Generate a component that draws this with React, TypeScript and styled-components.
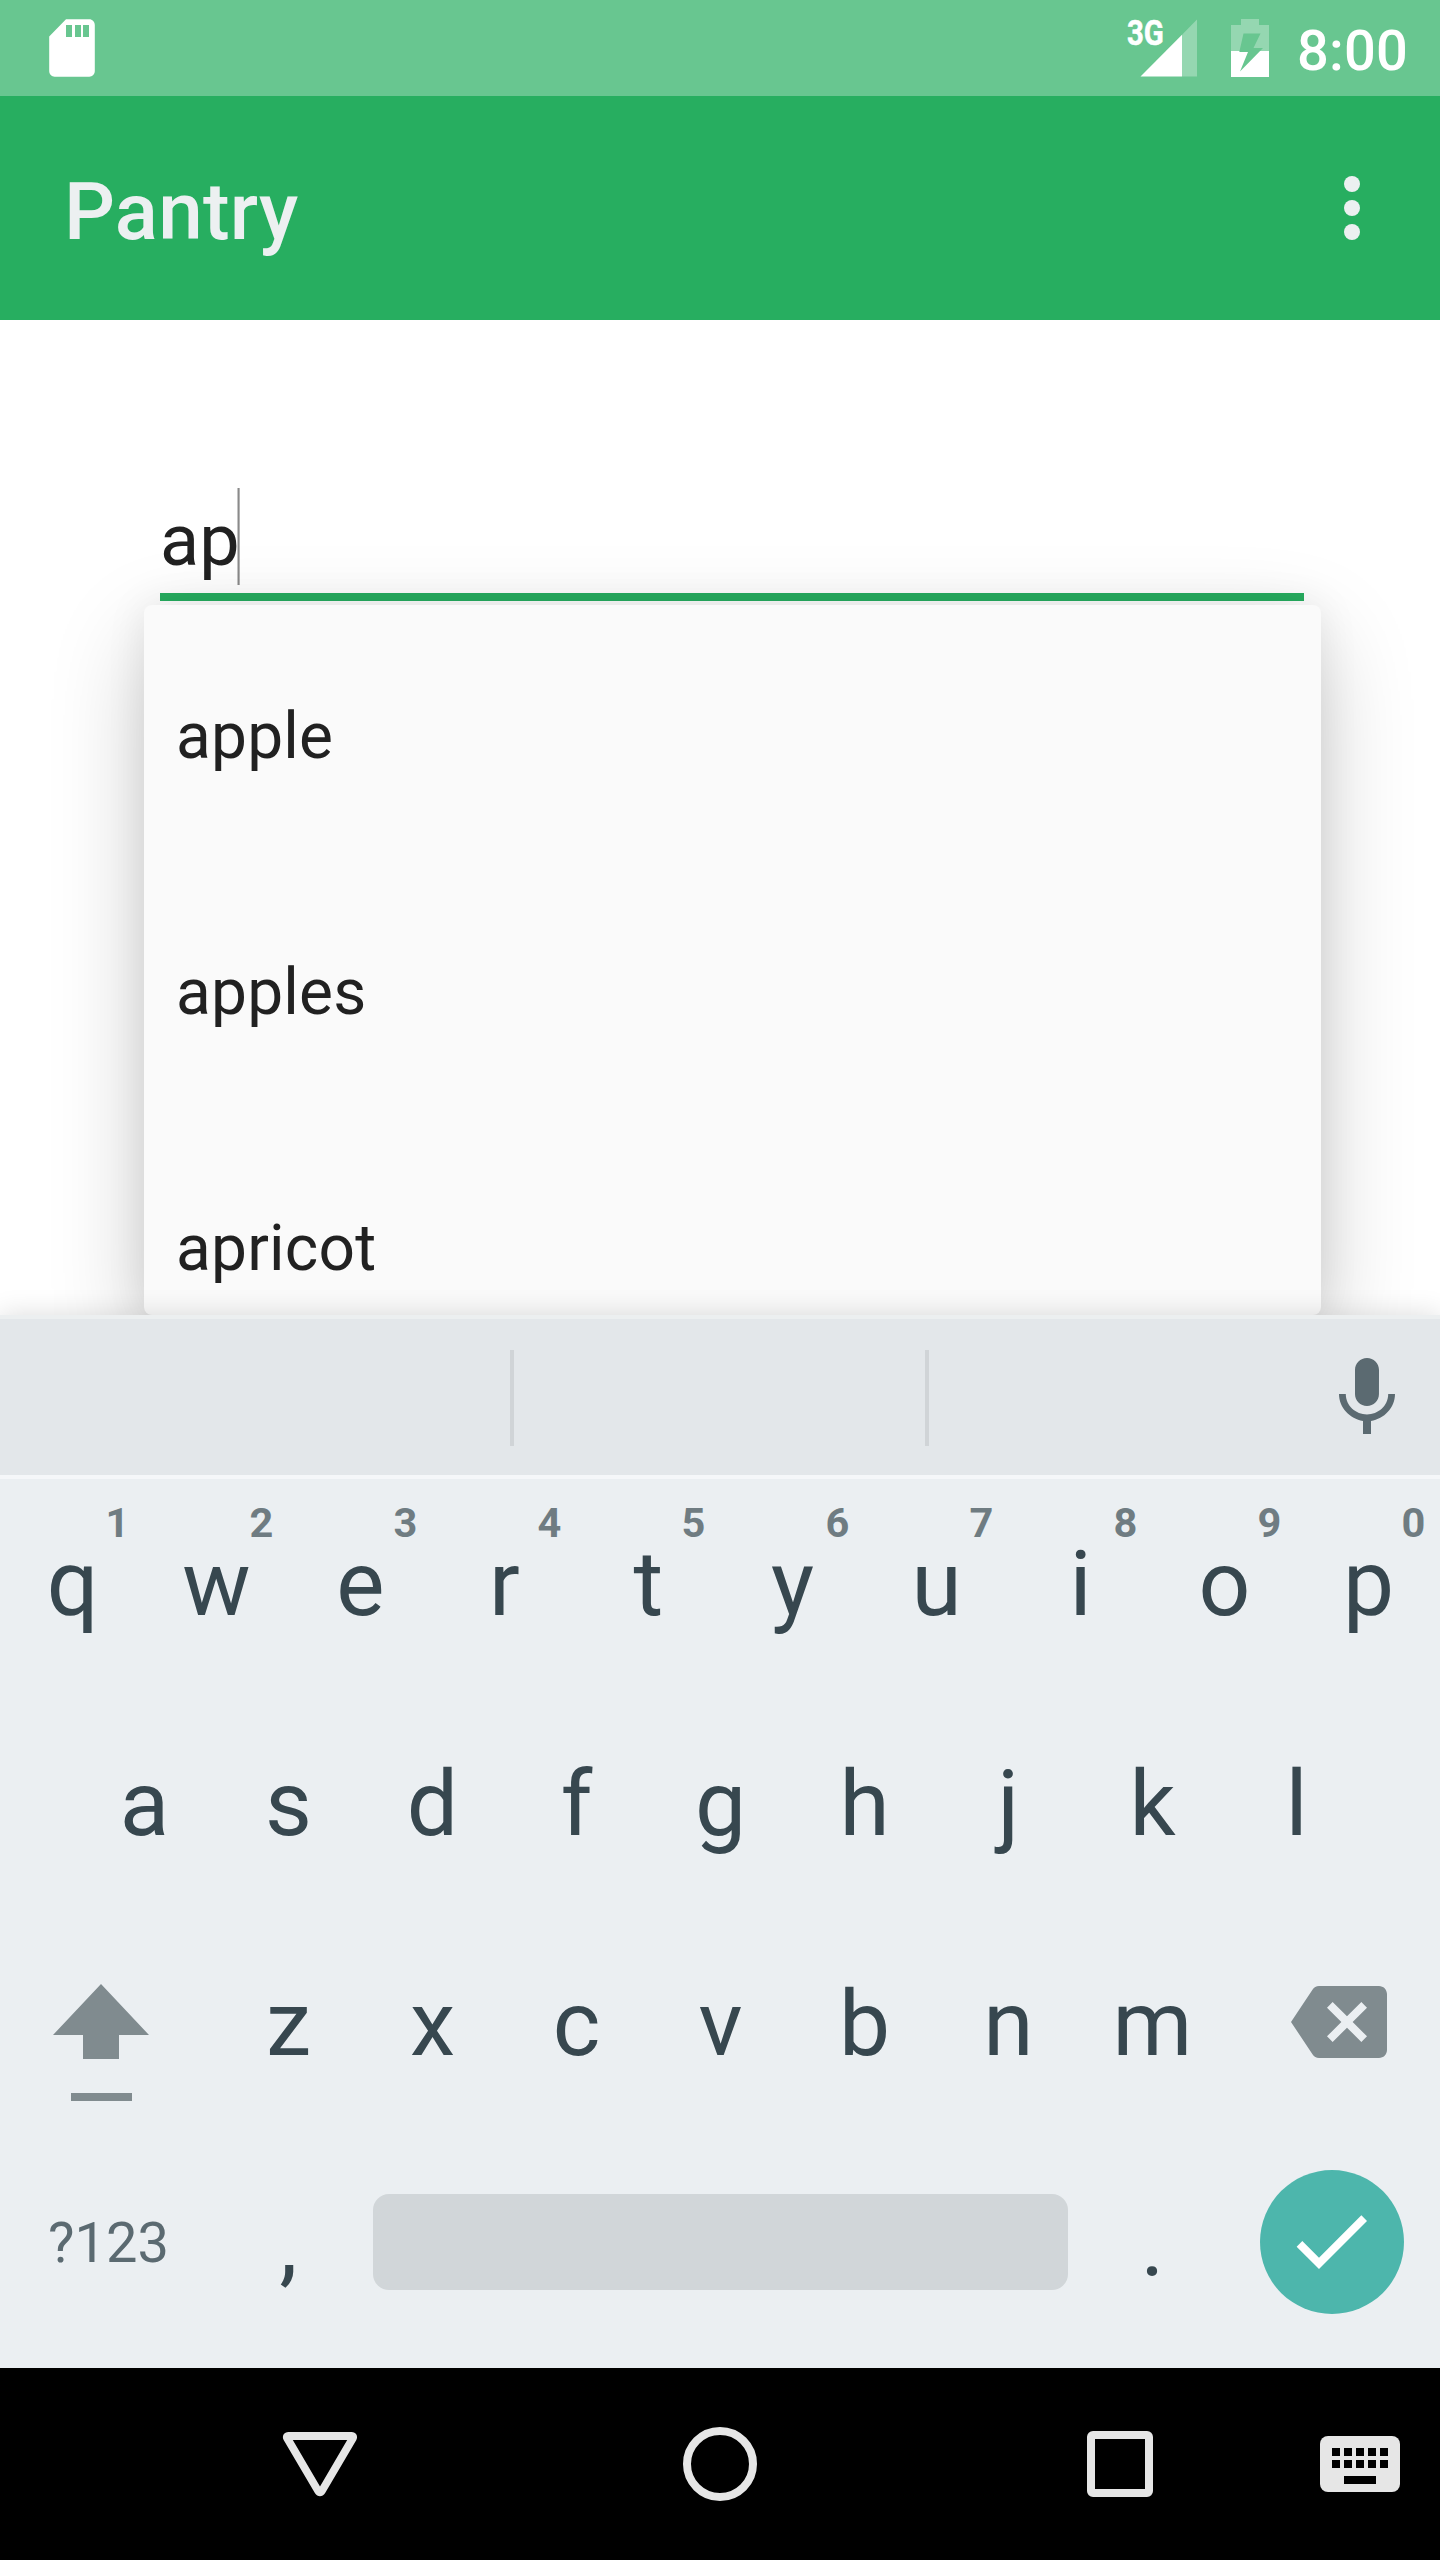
import React from "react";
import styled, { createGlobalStyle } from "styled-components";

const Global = createGlobalStyle`
  * { box-sizing: border-box; }
  body { margin: 0; background: #fff; font-family: Roboto, "Noto Sans", sans-serif; }
  svg { display: block; flex: none; }
`;

const Screen = styled.div`
  width: 1440px;
  height: 2560px;
  display: flex;
  flex-direction: column;
  overflow: hidden;
  background: #fff;
`;

const StatusBar = styled.header`
  height: 96px;
  flex: none;
  display: flex;
  justify-content: space-between;
  padding: 0 32px 0 44px;
  background: #68c690;
`;

const StatusGroup = styled.div`
  display: flex;
`;

const Network = styled.span`
  width: 34px;
  margin: 14px -22px 0 0;
  font-size: 35px;
  line-height: 40px;
  font-weight: 700;
  color: #fff;
  white-space: nowrap;
  -webkit-text-stroke: 0.5px #fff;
  transform: scaleX(0.84);
  transform-origin: 0 0;
`;

const Clock = styled.span`
  margin-top: 3px;
  font-size: 56px;
  line-height: 96px;
  font-weight: 500;
  letter-spacing: 0.2px;
  color: #fff;
`;

const AppBar = styled.div`
  height: 224px;
  flex: none;
  display: flex;
  align-items: center;
  justify-content: space-between;
  padding: 0 40px 0 64px;
  background: #27ae60;
`;

const Title = styled.h1`
  margin: 8px 0 0;
  font-size: 80px;
  line-height: 94px;
  font-weight: 500;
  letter-spacing: 0.2px;
  color: #ecf0f1;
`;

const Content = styled.main`
  height: 995px;
  flex: none;
  padding: 168px 119px 0 144px;
  display: flex;
  flex-direction: column;
  overflow: hidden;
`;

const Field = styled.div`
  display: flex;
  height: 113px;
  margin: 0 17px 4px 16px;
  border-bottom: 8px solid #27ae60;
`;

const FieldText = styled.span`
  font-size: 72px;
  line-height: 105px;
  color: #212121;
`;

const Caret = styled.i`
  width: 3px;
  height: 97px;
  margin-left: -3px;
  background: linear-gradient(90deg, #c4c4c4 1px, #8a8a8a 1px, #8a8a8a 2px, #b4b4b4 2px);
`;

const Suggestions = styled.ul`
  position: relative;
  flex: none;
  height: 710px;
  margin: 0;
  padding: 0;
  overflow: visible;
  list-style: none;
  background: #fafafa;
  border-radius: 8px;
  box-shadow: 0 34px 96px rgba(0, 0, 0, 0.2), 0 0 40px rgba(0, 0, 0, 0.08);
`;

const Suggestion = styled.li`
  height: 256px;
  padding: 7px 0 0 32px;
  font-size: 64px;
  line-height: 250px;
  letter-spacing: 0.2px;
  color: #212121;
`;

const Keyboard = styled.section`
  position: relative;
  height: 1053px;
  flex: none;
  background: #ebeff2;
  box-shadow: 0 0 26px rgba(0, 0, 0, 0.14);
`;

const Strip = styled.div`
  height: 164px;
  display: flex;
  align-items: center;
  padding-top: 2px;
  background: #e3e7ea;
  border-top: 4px solid #eceff0;
  border-bottom: 4px solid #f5f7f9;
`;

const Slot = styled.div<{ $w: number }>`
  width: ${(p) => p.$w}px;
  height: 96px;
  border-right: 4px solid #d0d4d7;
`;

const MicButton = styled.div`
  flex: 1;
  padding: 0 25px 0 0;
  display: flex;
  justify-content: flex-end;
`;

const Row = styled.div<{ $inset?: number }>`
  height: 220px;
  padding: 0 ${(p) => p.$inset ?? 0}px;
  display: flex;
`;

const Key = styled.div<{ $w?: number }>`
  position: relative;
  width: ${(p) => p.$w ?? 144}px;
  height: 220px;
  padding-left: 1px;
  display: flex;
  justify-content: center;
  font-size: 91px;
  line-height: 210px;
  color: #37474f;
`;

const Hint = styled.small`
  position: absolute;
  top: 19px;
  left: 97.5px;
  width: 40px;
  text-align: center;
  font-size: 41.5px;
  line-height: 50px;
  font-weight: 700;
  color: #6f7c82;
`;

const SymbolsKey = styled(Key)`
  font-size: 56px;
  line-height: 208px;
  color: #5b6a71;
`;

const IconKey = styled(Key)<{ $pad: string }>`
  padding: ${(p) => p.$pad};
  justify-content: flex-start;
`;

const SpaceKey = styled.div`
  width: 695px;
  height: 96px;
  margin: 55px 12px 0 13px;
  border-radius: 16px;
  background: #d1d6d9;
`;

const Done = styled.div`
  width: 144px;
  height: 144px;
  margin: 31px 0 0 36px;
  padding: 23px 0 0 23px;
  border-radius: 50%;
  background: #4db6ac;
`;

const NavBar = styled.nav`
  height: 192px;
  flex: none;
  display: flex;
  align-items: center;
  padding: 0 40px 0 280px;
  background: #000;
`;

const NavItem = styled.div<{ $gap: number }>`
  margin-right: ${(p) => p.$gap}px;
`;

const SdCard = () => (
  <svg width="56" height="96" viewBox="44 0 56 96">
    <path
      fill="#fff"
      fillRule="evenodd"
      d="M66 19.300h23.300c3 0 5.500 2.500 5.500 5.700v46c0 3.200-2.500 5.700-5.500 5.700H54.700c-3 0-5.500-2.500-5.500-5.700V36.500zM66 25v12h6V25zM75 25v12h6V25zM83 25v12h6V25z"
    />
  </svg>
);

const Signal = () => (
  <svg width="60" height="96" viewBox="1139 0 60 96">
    <path fill="#fff" fillOpacity=".3" d="M1182 34.800L1197 19.500V76.500H1182z" />
    <path fill="#fff" d="M1140.500 76.500L1182 34.800V76.500z" />
  </svg>
);

const Battery = () => (
  <svg width="98" height="96" viewBox="1199 0 98 96">
    <path fill="#fff" fillOpacity=".3" d="M1231 51V25h10v-6h18v6h10v26z" />
    <path fill="#fff" d="M1231 51h38v26h-38z" />
    <path fill="#68c690" d="M1243.500 33.500h17L1253.500 48h9.500L1240 71.500l8-19.500h-8.700z" />
  </svg>
);

const More = () => (
  <svg width="96" height="96" viewBox="0 0 24 24" fill="#ecf0f1">
    <circle cx="12" cy="6" r="2" />
    <circle cx="12" cy="12" r="2" />
    <circle cx="12" cy="18" r="2" />
  </svg>
);

const Mic = () => (
  <svg width="96" height="96" viewBox="0 0 24 24">
    <path
      fill="#5b6a71"
      d="M12 14c1.660 0 2.990-1.340 2.990-3L15 5c0-1.660-1.340-3-3-3S9 3.340 9 5v6c0 1.660 1.340 3 3 3zm5.300-3c0 3-2.540 5.100-5.300 5.100S6.700 14 6.700 11H5c0 3.410 2.720 6.230 6 6.720V21h2v-3.280c3.280-.48 6-3.300 6-6.720h-1.700z"
    />
  </svg>
);

const Shift = () => (
  <svg width="96" height="118" viewBox="53 1984 96 118" fill="#808b8f">
    <path d="M101 1984l48 51h-30v24H83v-24H53zM71 2093h61v8H71z" />
  </svg>
);

const Backspace = () => (
  <svg width="96" height="96" viewBox="0 0 24 24">
    <path
      fill="#808b8f"
      d="M22 3H7c-.69 0-1.230.35-1.590.88L0 12l5.410 8.110c.36.53.9.89 1.590.89h15c1.100 0 2-.9 2-2V5c0-1.100-.9-2-2-2zm-3 12.590L17.590 17 14 13.410 10.410 17 9 15.590 12.590 12 9 8.410 10.410 7 14 10.590 17.590 7 19 8.410 15.410 12 19 15.590z"
    />
  </svg>
);

const Check = () => (
  <svg width="96" height="96" viewBox="0 0 24 24">
    <path fill="#fff" d="M9 16.170L4.830 12l-1.420 1.410L9 19 21 7l-1.410-1.410z" />
  </svg>
);

const Back = () => (
  <svg width="80" height="80" viewBox="280 2424 80 80">
    <path
      fill="#e6e6e6"
      fillRule="evenodd"
      d="M288.500 2432h63c4.500 0 7 4.200 4.700 8.200l-31.200 53c-2.400 4-7.600 4-10 0l-31.200-53c-2.300-4 .2-8.200 4.700-8.200zM292.800 2440L320 2486.500L347.200 2440z"
    />
  </svg>
);

const Home = () => (
  <svg width="80" height="80" viewBox="0 0 80 80">
    <circle cx="40" cy="40" r="33" fill="none" stroke="#e6e6e6" strokeWidth="8" />
  </svg>
);

const Recents = () => (
  <svg width="80" height="80" viewBox="0 0 80 80">
    <path
      fill="#e6e6e6"
      fillRule="evenodd"
      d="M13 7h54a6 6 0 0 1 6 6v54a6 6 0 0 1-6 6H13a6 6 0 0 1-6-6V13a6 6 0 0 1 6-6zM15 15v50h50V15z"
    />
  </svg>
);

const KeyboardSwitch = () => (
  <svg width="80" height="56" viewBox="0 0 80 56">
    <rect width="80" height="56" rx="8" fill="#e6e6e6" />
    {[12, 24, 36, 48, 60].map((x) => (
      <path key={x} d={`M${x} 12h8v8h-8zM${x} 24h8v8h-8z`} />
    ))}
    <path d="M24 40h32v8H24z" />
  </svg>
);

const suggestions = ["apple", "apples", "apricot"];
const digits = "1234567890";

export default function App() {
  return (
    <Screen>
      <Global />
      <StatusBar>
        <SdCard />
        <StatusGroup>
          <Network>3G</Network>
          <Signal />
          <Battery />
          <Clock>8:00</Clock>
        </StatusGroup>
      </StatusBar>
      <AppBar>
        <Title>Pantry</Title>
        <More />
      </AppBar>
      <Content>
        <Field>
          <FieldText>ap</FieldText>
          <Caret />
        </Field>
        <Suggestions>
          {suggestions.map((s) => (
            <Suggestion key={s}>{s}</Suggestion>
          ))}
        </Suggestions>
      </Content>
      <Keyboard>
        <Strip>
          <Slot $w={514} />
          <Slot $w={415} />
          <MicButton>
            <Mic />
          </MicButton>
        </Strip>
        <Row>
          {[..."qwertyuiop"].map((k, i) => (
            <Key key={k}>
              {k}
              <Hint>{digits[i]}</Hint>
            </Key>
          ))}
        </Row>
        <Row $inset={72}>
          {[..."asdfghjkl"].map((k) => (
            <Key key={k}>{k}</Key>
          ))}
        </Row>
        <Row>
          <IconKey $w={216} $pad="65px 0 0 53px">
            <Shift />
          </IconKey>
          {[..."zxcvbnm"].map((k) => (
            <Key key={k}>{k}</Key>
          ))}
          <IconKey $w={216} $pad="55px 0 0 67px">
            <Backspace />
          </IconKey>
        </Row>
        <Row>
          <SymbolsKey $w={216}>?123</SymbolsKey>
          <Key>,</Key>
          <SpaceKey />
          <Key>.</Key>
          <Done>
            <Check />
          </Done>
        </Row>
      </Keyboard>
      <NavBar>
        <NavItem $gap={320}>
          <Back />
        </NavItem>
        <NavItem $gap={320}>
          <Home />
        </NavItem>
        <NavItem $gap={160}>
          <Recents />
        </NavItem>
        <KeyboardSwitch />
      </NavBar>
    </Screen>
  );
}
